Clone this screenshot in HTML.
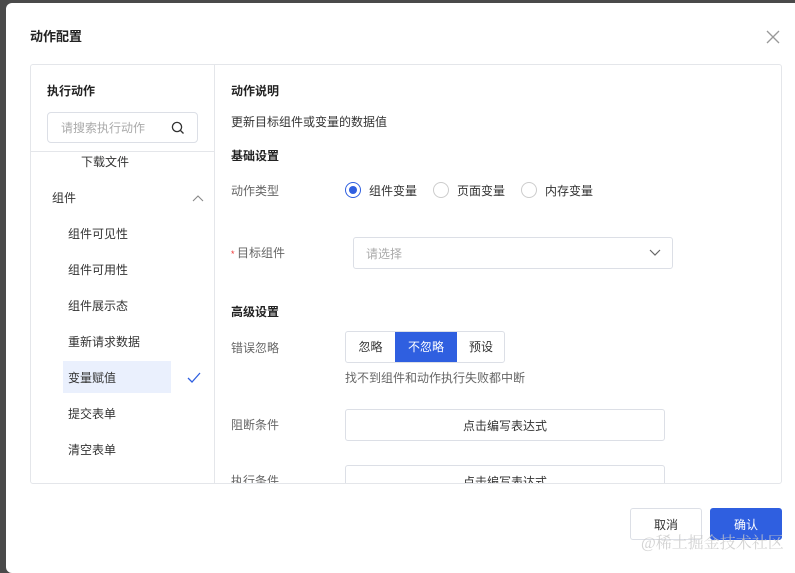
<!DOCTYPE html>
<html><head><meta charset="utf-8"><style>
*{box-sizing:border-box;margin:0;padding:0}
body{width:795px;height:560px;background:#4a4a4a;font-family:"Liberation Sans","Noto Sans CJK SC",sans-serif;font-size:12px;line-height:12px;color:#333;position:relative;overflow:hidden}
.modal{position:absolute;left:6px;top:3px;width:800px;height:570px;background:#fff;border-radius:6px}
.abs{position:absolute}
.title{left:24px;top:27px;font-size:13px;line-height:13px;font-weight:bold;color:#222}
.box{position:absolute;left:24px;top:61px;width:752px;height:420px;border:1px solid #e4e6ea;border-radius:3px;overflow:hidden}
.left{position:absolute;left:0;top:0;width:184px;height:100%;border-right:1px solid #e4e6ea}
.b{font-weight:bold;color:#222}
.search{left:16px;top:47px;width:151px;height:31px;border:1px solid #dcdfe6;border-radius:4px;color:#aaa;padding:9px 13px}
.item{position:absolute;left:37px;color:#333}
.sel{left:32px;top:296px;width:108px;height:32px;background:#eaf0fd}
.gray{color:#666}
.radio{position:absolute;width:16px;height:16px;border:1px solid #ccc;border-radius:50%}
.btn{position:absolute;border:1px solid #dcdfe6;border-radius:3px;text-align:center;background:#fff}
</style></head><body>
<div class="modal">
<div class="abs title">动作配置</div>
<svg class="abs" style="left:760px;top:27px" width="14" height="14"><path d="M1 1L13 13M13 1L1 13" stroke="#999" stroke-width="1.3"/></svg>
<div class="box">
 <div class="left">
  <div class="abs b" style="left:16px;top:20px">执行动作</div>
  <div class="abs search">请搜索执行动作</div>
  <svg class="abs" style="left:140px;top:56px" width="14" height="14"><circle cx="6" cy="6" r="4.6" fill="none" stroke="#333" stroke-width="1.3"/><path d="M9.5 9.5L12.5 12.5" stroke="#333" stroke-width="1.3"/></svg>
  <div class="abs" style="left:0;top:86px;width:184px;border-top:1px solid #e4e6ea"></div>
  <div class="item" style="top:91px;left:50px">下载文件</div>
  <div class="item" style="top:127px;left:21px">组件</div>
  <svg class="abs" style="left:161px;top:130px" width="12" height="8"><path d="M1 6L6 1L11 6" fill="none" stroke="#888" stroke-width="1.1"/></svg>
  <div class="abs sel"></div>
  <div class="item" style="top:163px">组件可见性</div>
  <div class="item" style="top:199px">组件可用性</div>
  <div class="item" style="top:235px">组件展示态</div>
  <div class="item" style="top:271px">重新请求数据</div>
  <div class="item" style="top:307px">变量赋值</div>
  <svg class="abs" style="left:156px;top:307px" width="14" height="12"><path d="M1 6L5 10L13 1" fill="none" stroke="#2f5fe0" stroke-width="1.3"/></svg>
  <div class="item" style="top:343px">提交表单</div>
  <div class="item" style="top:379px">清空表单</div>
 </div>
 <div class="abs b" style="left:200px;top:20px">动作说明</div>
 <div class="abs" style="left:200px;top:51px">更新目标组件或变量的数据值</div>
 <div class="abs b" style="left:200px;top:85px">基础设置</div>
 <div class="abs gray" style="left:200px;top:120px">动作类型</div>
 <div class="radio" style="left:314px;top:117px;border:1px solid #2f5fe0"><div style="position:absolute;left:3px;top:3px;width:8px;height:8px;border-radius:50%;background:#2f5fe0"></div></div>
 <div class="abs" style="left:338px;top:120px">组件变量</div>
 <div class="radio" style="left:402px;top:117px"></div>
 <div class="abs" style="left:426px;top:120px">页面变量</div>
 <div class="radio" style="left:490px;top:117px"></div>
 <div class="abs" style="left:514px;top:120px">内存变量</div>
 <div class="abs gray" style="left:200px;top:182px"><span style="color:#e33;font-size:9px">* </span>目标组件</div>
 <div class="btn" style="left:322px;top:172px;width:320px;height:32px;text-align:left;padding:10px 12px;color:#aaa">请选择</div>
 <svg class="abs" style="left:618px;top:184px" width="12" height="8"><path d="M1 1L6 6L11 1" fill="none" stroke="#666" stroke-width="1.2"/></svg>
 <div class="abs b" style="left:200px;top:241px">高级设置</div>
 <div class="abs gray" style="left:200px;top:277px">错误忽略</div>
 <div class="btn" style="left:314px;top:266px;width:160px;height:32px;overflow:hidden">
  <div class="abs" style="left:0;top:0;width:49px;height:30px;padding-top:9px">忽略</div>
  <div class="abs" style="left:49px;top:-1px;width:62px;height:32px;background:#2f5fe0;color:#fff;padding-top:10px">不忽略</div>
  <div class="abs" style="left:111px;top:0;width:48px;height:30px;padding-top:9px">预设</div>
 </div>
 <div class="abs gray" style="left:314px;top:307px">找不到组件和动作执行失败都中断</div>
 <div class="abs gray" style="left:200px;top:354px">阻断条件</div>
 <div class="btn" style="left:314px;top:344px;width:320px;height:32px;padding-top:10px">点击编写表达式</div>
 <div class="abs gray" style="left:200px;top:410px">执行条件</div>
 <div class="btn" style="left:314px;top:400px;width:320px;height:32px;padding-top:10px">点击编写表达式</div>
</div>
<div class="btn" style="left:624px;top:505px;width:72px;height:32px;padding-top:10px">取消</div>
<div class="btn" style="left:704px;top:505px;width:72px;height:32px;padding-top:10px;background:#2f5fe0;border-color:#2f5fe0;color:#fff">确认</div>
<div class="abs" style="left:635px;top:533px;font-size:16px;line-height:16px;color:rgba(200,200,200,.8);font-family:'Liberation Serif','Noto Serif CJK SC',serif">@稀土掘金技术社区</div>
</div>
</body></html>
